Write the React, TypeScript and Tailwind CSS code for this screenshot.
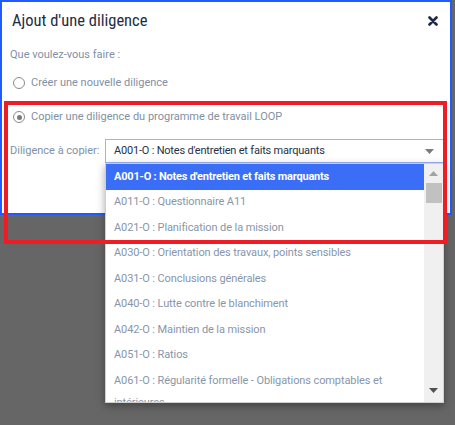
const items = [
  "A001-O : Notes d'entretien et faits marquants",
  "A011-O : Questionnaire A11",
  "A021-O : Planification de la mission",
  "A030-O : Orientation des travaux, points sensibles",
  "A031-O : Conclusions générales",
  "A040-O : Lutte contre le blanchiment",
  "A042-O : Maintien de la mission",
  "A051-O : Ratios",
  "A061-O : Régularité formelle - Obligations comptables et intérieures",
];

function Radio({ checked }: { checked?: boolean }) {
  return (
    <span className="flex h-[12px] w-[12px] items-center justify-center rounded-full border-[1.5px] border-[#8a8a8a]">
      {checked && <span className="h-[5px] w-[5px] rounded-full bg-[#7a7a7a]" />}
    </span>
  );
}

function Caret({ className }: { className: string }) {
  return (
    <svg width="9" height="5" viewBox="0 0 9 5" className={className}>
      <path d="M0 0h9L4.5 5z" fill="currentColor" />
    </svg>
  );
}

export default function App() {
  return (
    <div
      className="relative h-[425px] w-[455px] overflow-hidden bg-[#666666]"
      style={{ fontFamily: "Roboto, 'Liberation Sans', sans-serif" }}
    >
      <div className="h-[215px] w-[452px] border-2 border-[#1f5bff] bg-white">
        <div className="flex h-[36px] items-center justify-between pl-[10px] pr-[12px] pt-[2px]">
          <h1
            className="text-[16.5px] leading-5 text-[#1e2d42]"
            style={{ fontFamily: "'Roboto Condensed', Roboto, sans-serif" }}
          >
            Ajout d'une diligence
          </h1>
          <svg width="10" height="10" viewBox="0 0 10 10" className="text-[#1b2a48]">
            <path d="M1.5 1.5l7 7M8.5 1.5l-7 7" stroke="currentColor" strokeWidth="2.6" strokeLinecap="round" />
          </svg>
        </div>

        <div className="pl-[8px] pr-[6px] pt-[9px] text-[11px] text-[#8290a4]">
          <p className="leading-4">Que voulez-vous faire :</p>

          <label className="mt-[12px] flex items-center gap-[6px] pl-[3px] leading-4">
            <Radio />
            Créer une nouvelle diligence
          </label>

          <label className="mt-[18px] flex items-center gap-[6px] pl-[3px] leading-4">
            <Radio checked />
            Copier une diligence du programme de travail LOOP
          </label>

          <div className="mt-[14px] flex items-center">
            <span className="w-[95px] shrink-0 whitespace-nowrap leading-4">Diligence à copier:</span>
            <div className="relative flex-1">
              <div className="flex h-[24px] items-center justify-between border border-[#9db3f5] pl-[8px] pr-[9px] text-[11px] tracking-[-0.2px] text-[#243247]">
                <span>A001-O : Notes d'entretien et faits marquants</span>
                <Caret className="text-[#7c7c7c]" />
              </div>

              <div className="absolute left-0 right-0 top-full z-10 flex h-[240px] border border-[#cfcfcf] bg-white shadow-[0_3px_8px_rgba(0,0,0,0.35)]">
                <ul className="flex-1 overflow-hidden">
                  {items.map((t, i) => (
                    <li
                      key={t}
                      className={
                        i === 0
                          ? "bg-[#3a6ef6] py-[1.75px] pl-[8px] text-[11px] font-bold leading-[22px] tracking-[-0.2px] text-white"
                          : "py-[1.75px] pl-[8px] text-[11px] leading-[22px] tracking-[-0.1px] text-[#8896aa]"
                      }
                    >
                      {t}
                    </li>
                  ))}
                </ul>
                <div className="flex w-[19px] flex-col items-center bg-[#f0f0f0]">
                  <div className="flex h-[19px] items-center justify-center">
                    <Caret className="rotate-180 text-[#a3a3a3]" />
                  </div>
                  <div className="h-[20px] w-[16px] bg-[#c1c1c1]" />
                  <div className="flex-1" />
                  <div className="flex h-[24px] items-center justify-center">
                    <Caret className="text-[#505050]" />
                  </div>
                </div>
              </div>
            </div>
          </div>
        </div>
      </div>

      <div className="pointer-events-none absolute left-[4px] top-[101px] z-20 h-[143px] w-[443px] border-[4px] border-[#ee1c25]" />
    </div>
  );
}
